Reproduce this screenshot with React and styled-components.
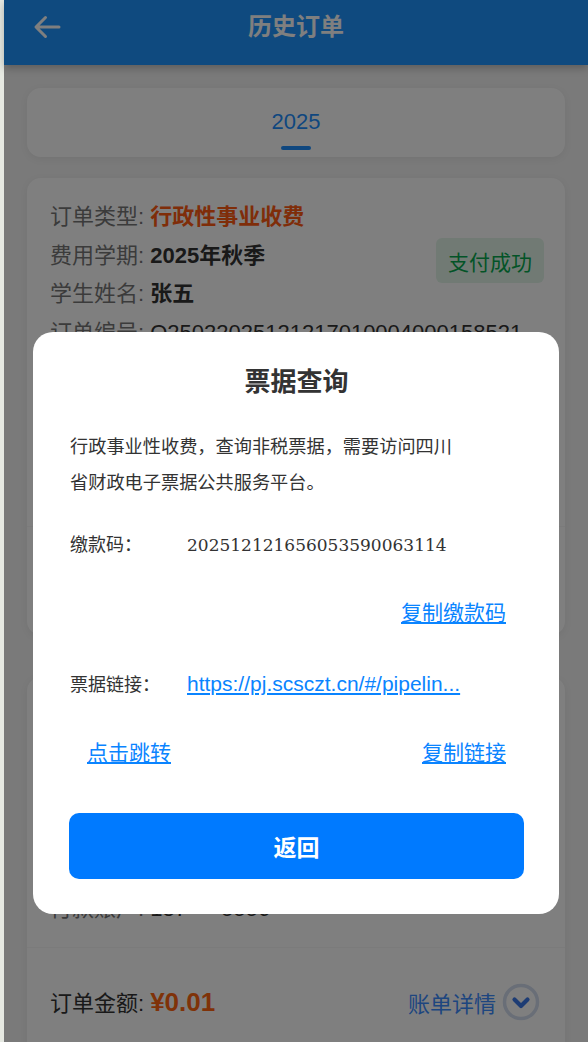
import React from "react";
import styled, { createGlobalStyle } from "styled-components";

const GlobalStyle = createGlobalStyle`
  html, body {
    margin: 0;
    padding: 0;
    background: #e6e9e2;
  }
  body {
    font-family: "Liberation Sans", "Noto Sans CJK SC", sans-serif;
    color: #333;
  }
`;

const Page = styled.div`
  margin-left: 4px;
  min-height: 1042px;
  background: #f4f4f4;
  position: relative;
`;

const Header = styled.div`
  height: 65px;
  background: #1e94ff;
  box-shadow: 0 3px 8px rgba(0, 0, 0, 0.25);
  display: flex;
  align-items: flex-start;
  justify-content: center;
  position: relative;
  .back {
    position: absolute;
    left: 27px;
    top: 13px;
  }
  h1 {
    margin: 0;
    height: 54px;
    line-height: 54px;
    font-size: 24px;
    font-weight: 600;
    color: #fff;
  }
`;

const Content = styled.div`
  padding: 23px 23px 0;
  display: flex;
  flex-direction: column;
`;

const TabCard = styled.div`
  height: 69px;
  background: #fff;
  border-radius: 14px;
  box-shadow: 0 2px 8px rgba(0, 0, 0, 0.06);
  display: flex;
  flex-direction: column;
  align-items: center;
  justify-content: flex-start;
  span {
    margin-top: 21px;
    font-size: 22px;
    line-height: 26px;
    color: #1e8fff;
  }
  i {
    display: block;
    margin-top: 11px;
    width: 30px;
    height: 4px;
    border-radius: 2px;
    background: #1e8fff;
  }
`;

const OrderCard = styled.div`
  margin-top: ${(p) => p.$gap}px;
  background: #fff;
  border-radius: 14px;
  box-shadow: 0 2px 8px rgba(0, 0, 0, 0.06);
  position: relative;
`;

const Rows = styled.div`
  padding: 20px 23px 18px;
  display: flex;
  flex-direction: column;
`;

const Row = styled.div`
  font-size: 22px;
  line-height: 38.7px;
  color: #777;
  white-space: nowrap;
  overflow: hidden;
  b {
    font-weight: ${(p) => (p.$plain ? 400 : 700)};
    color: ${(p) => p.$color || "#333"};
  }
`;

const Status = styled.div`
  position: absolute;
  right: 21px;
  top: 60px;
  width: 108px;
  height: 45px;
  border-radius: 6px;
  background: #e2f5e9;
  color: #06a84e;
  font-size: 21px;
  display: flex;
  align-items: center;
  justify-content: center;
`;

const Footer = styled.div`
  height: 108px;
  border-top: 1px solid #f6f6f6;
  padding: 0 25px 0 23px;
  display: flex;
  align-items: center;
  justify-content: space-between;
  font-size: 22px;
  color: #333;
  .amount {
    font-size: 26px;
    font-weight: 700;
    color: #ff6410;
    margin-left: 6px;
  }
`;

const Detail = styled.div`
  display: flex;
  align-items: center;
  gap: 6px;
  color: #3c8cff;
  font-size: 22px;
`;

const Overlay = styled.div`
  position: fixed;
  top: 0;
  bottom: 0;
  left: 4px;
  right: 0;
  background: rgba(0, 0, 0, 0.5);
  display: flex;
  justify-content: center;
  align-items: flex-start;
  padding-top: 332px;
`;

const Modal = styled.div`
  width: 526px;
  box-sizing: border-box;
  background: #fff;
  border-radius: 20px;
  padding: 32px 35px 35px 36px;
  display: flex;
  flex-direction: column;
`;

const Title = styled.h2`
  margin: 0;
  text-align: center;
  font-size: 26px;
  line-height: 36px;
  font-weight: 700;
  color: #333;
`;

const Desc = styled.p`
  margin: 29px 0 0 1px;
  padding-right: 58px;
  font-size: 18.2px;
  line-height: 36px;
  color: #333;
`;

const Field = styled.div`
  margin-top: ${(p) => p.$top}px;
  margin-left: 1px;
  display: grid;
  grid-template-columns: 117px 1fr;
  align-items: baseline;
  font-size: 18px;
  line-height: 36px;
  color: #333;
`;

const Code = styled.span`
  font-family: "DejaVu Serif", serif;
  font-size: 17px;
`;

const LinkRow = styled.div`
  margin-top: ${(p) => p.$top}px;
  padding: 0 18px;
  display: flex;
  justify-content: ${(p) => p.$align || "space-between"};
  line-height: 36px;
`;

const Link = styled.a`
  font-size: 21px;
  color: #0a84ff;
  text-decoration: underline;
  cursor: pointer;
`;

const BackButton = styled.button`
  margin-top: 42px;
  height: 66px;
  border: none;
  border-radius: 10px;
  background: #007aff;
  color: #fff;
  font-family: inherit;
  font-size: 23px;
  font-weight: 700;
`;

const BackIcon = () => (
  <svg width="32" height="28" viewBox="0 0 32 28" fill="none">
    <path d="M28 14H6M14.5 4.5L5 14l9.5 9.5" stroke="#fff" strokeWidth="3" strokeLinecap="round" strokeLinejoin="round" />
  </svg>
);

const ChevronCircle = () => (
  <svg width="38" height="38" viewBox="0 0 38 38" fill="none">
    <circle cx="19" cy="19" r="16.5" stroke="#d3ddee" strokeWidth="3.5" />
    <path d="M12.5 16.5l6.5 6.5 6.5-6.5" stroke="#3a78e8" strokeWidth="4.2" strokeLinecap="round" strokeLinejoin="round" />
  </svg>
);

const orders = [
  {
    gap: 21,
    rows: [
      ["订单类型", "行政性事业收费", "#ff5a12"],
      ["费用学期", "2025年秋季"],
      ["学生姓名", "张五"],
      ["订单编号", "O25022025121217010004000158521", null, true],
      ["缴费项目", "住宿费"],
      ["支付方式", "微信支付", null, true],
      ["支付时间", "2025-12-12 17:01:23", null, true],
      ["付款账户", "187****5556", null, true],
    ],
  },
  {
    gap: 42,
    rows: [
      ["订单类型", "行政性事业收费", "#ff5a12"],
      ["费用学期", "2025年秋季"],
      ["学生姓名", "张五"],
      ["订单编号", "O25022025121216560400015852", null, true],
      ["支付时间", "2025-12-12 16:56:05", null, true],
      ["付款账户", "187****5556", null, true],
    ],
  },
];

export default function App() {
  return (
    <>
      <GlobalStyle />
      <Page>
        <Header>
          <span className="back">
            <BackIcon />
          </span>
          <h1>历史订单</h1>
        </Header>
        <Content>
          <TabCard>
            <span>2025</span>
            <i />
          </TabCard>
          {orders.map((o, idx) => (
            <OrderCard key={idx} $gap={o.gap}>
              <Rows>
                {o.rows.map(([label, value, color, plain]) => (
                  <Row key={label} $color={color} $plain={plain}>
                    {label}: <b>{value}</b>
                  </Row>
                ))}
              </Rows>
              <Status>支付成功</Status>
              <Footer>
                <div>
                  订单金额:<span className="amount">¥0.01</span>
                </div>
                <Detail>
                  账单详情
                  <ChevronCircle />
                </Detail>
              </Footer>
            </OrderCard>
          ))}
        </Content>
        <Overlay>
          <Modal>
            <Title>票据查询</Title>
            <Desc>行政事业性收费，查询非税票据，需要访问四川省财政电子票据公共服务平台。</Desc>
            <Field $top={26}>
              <span>缴款码：</span>
              <Code>202512121656053590063114</Code>
            </Field>
            <LinkRow $top={32} $align="flex-end">
              <Link>复制缴款码</Link>
            </LinkRow>
            <Field $top={35}>
              <span>票据链接：</span>
              <Link>https://pj.scsczt.cn/#/pipelin...</Link>
            </Field>
            <LinkRow $top={32}>
              <Link>点击跳转</Link>
              <Link>复制链接</Link>
            </LinkRow>
            <BackButton>返回</BackButton>
          </Modal>
        </Overlay>
      </Page>
    </>
  );
}
